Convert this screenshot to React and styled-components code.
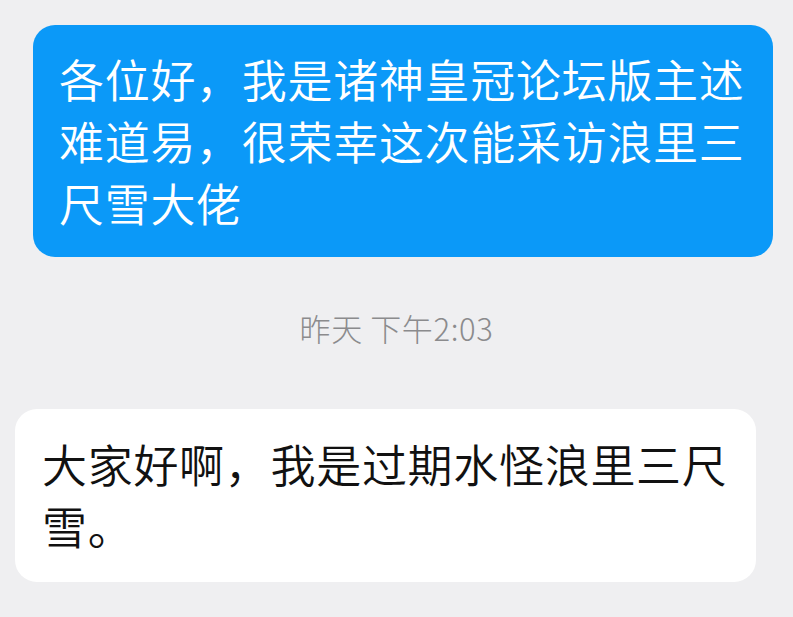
import React from 'react'
import styled, { createGlobalStyle } from 'styled-components'

const GlobalStyle = createGlobalStyle`
  html, body {
    margin: 0;
    padding: 0;
    background: #efeff1;
  }
  body {
    font-family: "Noto Sans CJK SC", "Noto Sans", sans-serif;
  }
`

const messages = [
  { id: 1, mine: true, text: '各位好，我是诸神皇冠论坛版主述难道易，很荣幸这次能采访浪里三尺雪大佬' },
  { id: 2, time: '昨天 下午2:03' },
  { id: 3, mine: false, text: '大家好啊，我是过期水怪浪里三尺雪。' },
]

const Chat = () => {
  return (
    <ChatStyle>
      {messages.map(({ id, mine, text, time }) =>
        time
          ? <TimeStyle key={id}>{time}</TimeStyle>
          : (
            <Row key={id} mine={mine}>
              <Bubble mine={mine}>{text}</Bubble>
            </Row>
          )
      )}
    </ChatStyle>
  )
}

export default function App() {
  return (
    <>
      <GlobalStyle />
      <Chat />
    </>
  )
}

const ChatStyle = styled.div`
  width: 793px;
  height: 617px;
  overflow: hidden;
  display: flex;
  flex-direction: column;
  padding-top: 25px;
  box-sizing: border-box;
`

const Row = styled.div`
  display: flex;
  justify-content: ${props => props.mine ? 'flex-end' : 'flex-start'};
  padding: ${props => props.mine ? '0 20px 0 33px' : '0 37px 0 15px'};
`

const Bubble = styled.div`
  width: 100%;
  box-sizing: border-box;
  padding: ${props => props.mine ? '23px 20px 23px 26px' : '24px 20px 25px 27px'};
  border-radius: 22px;
  font-size: 45px;
  line-height: 62px;
  letter-spacing: 0.7px;
  font-weight: 350;
  background: ${props => props.mine ? '#0b99f8' : '#ffffff'};
  color: ${props => props.mine ? '#ffffff' : '#111111'};
`

const TimeStyle = styled.div`
  margin: 51px 0 61px;
  text-align: center;
  font-size: 31px;
  line-height: 40px;
  letter-spacing: 0.6px;
  font-weight: 300;
  color: #8b8b8d;
`
